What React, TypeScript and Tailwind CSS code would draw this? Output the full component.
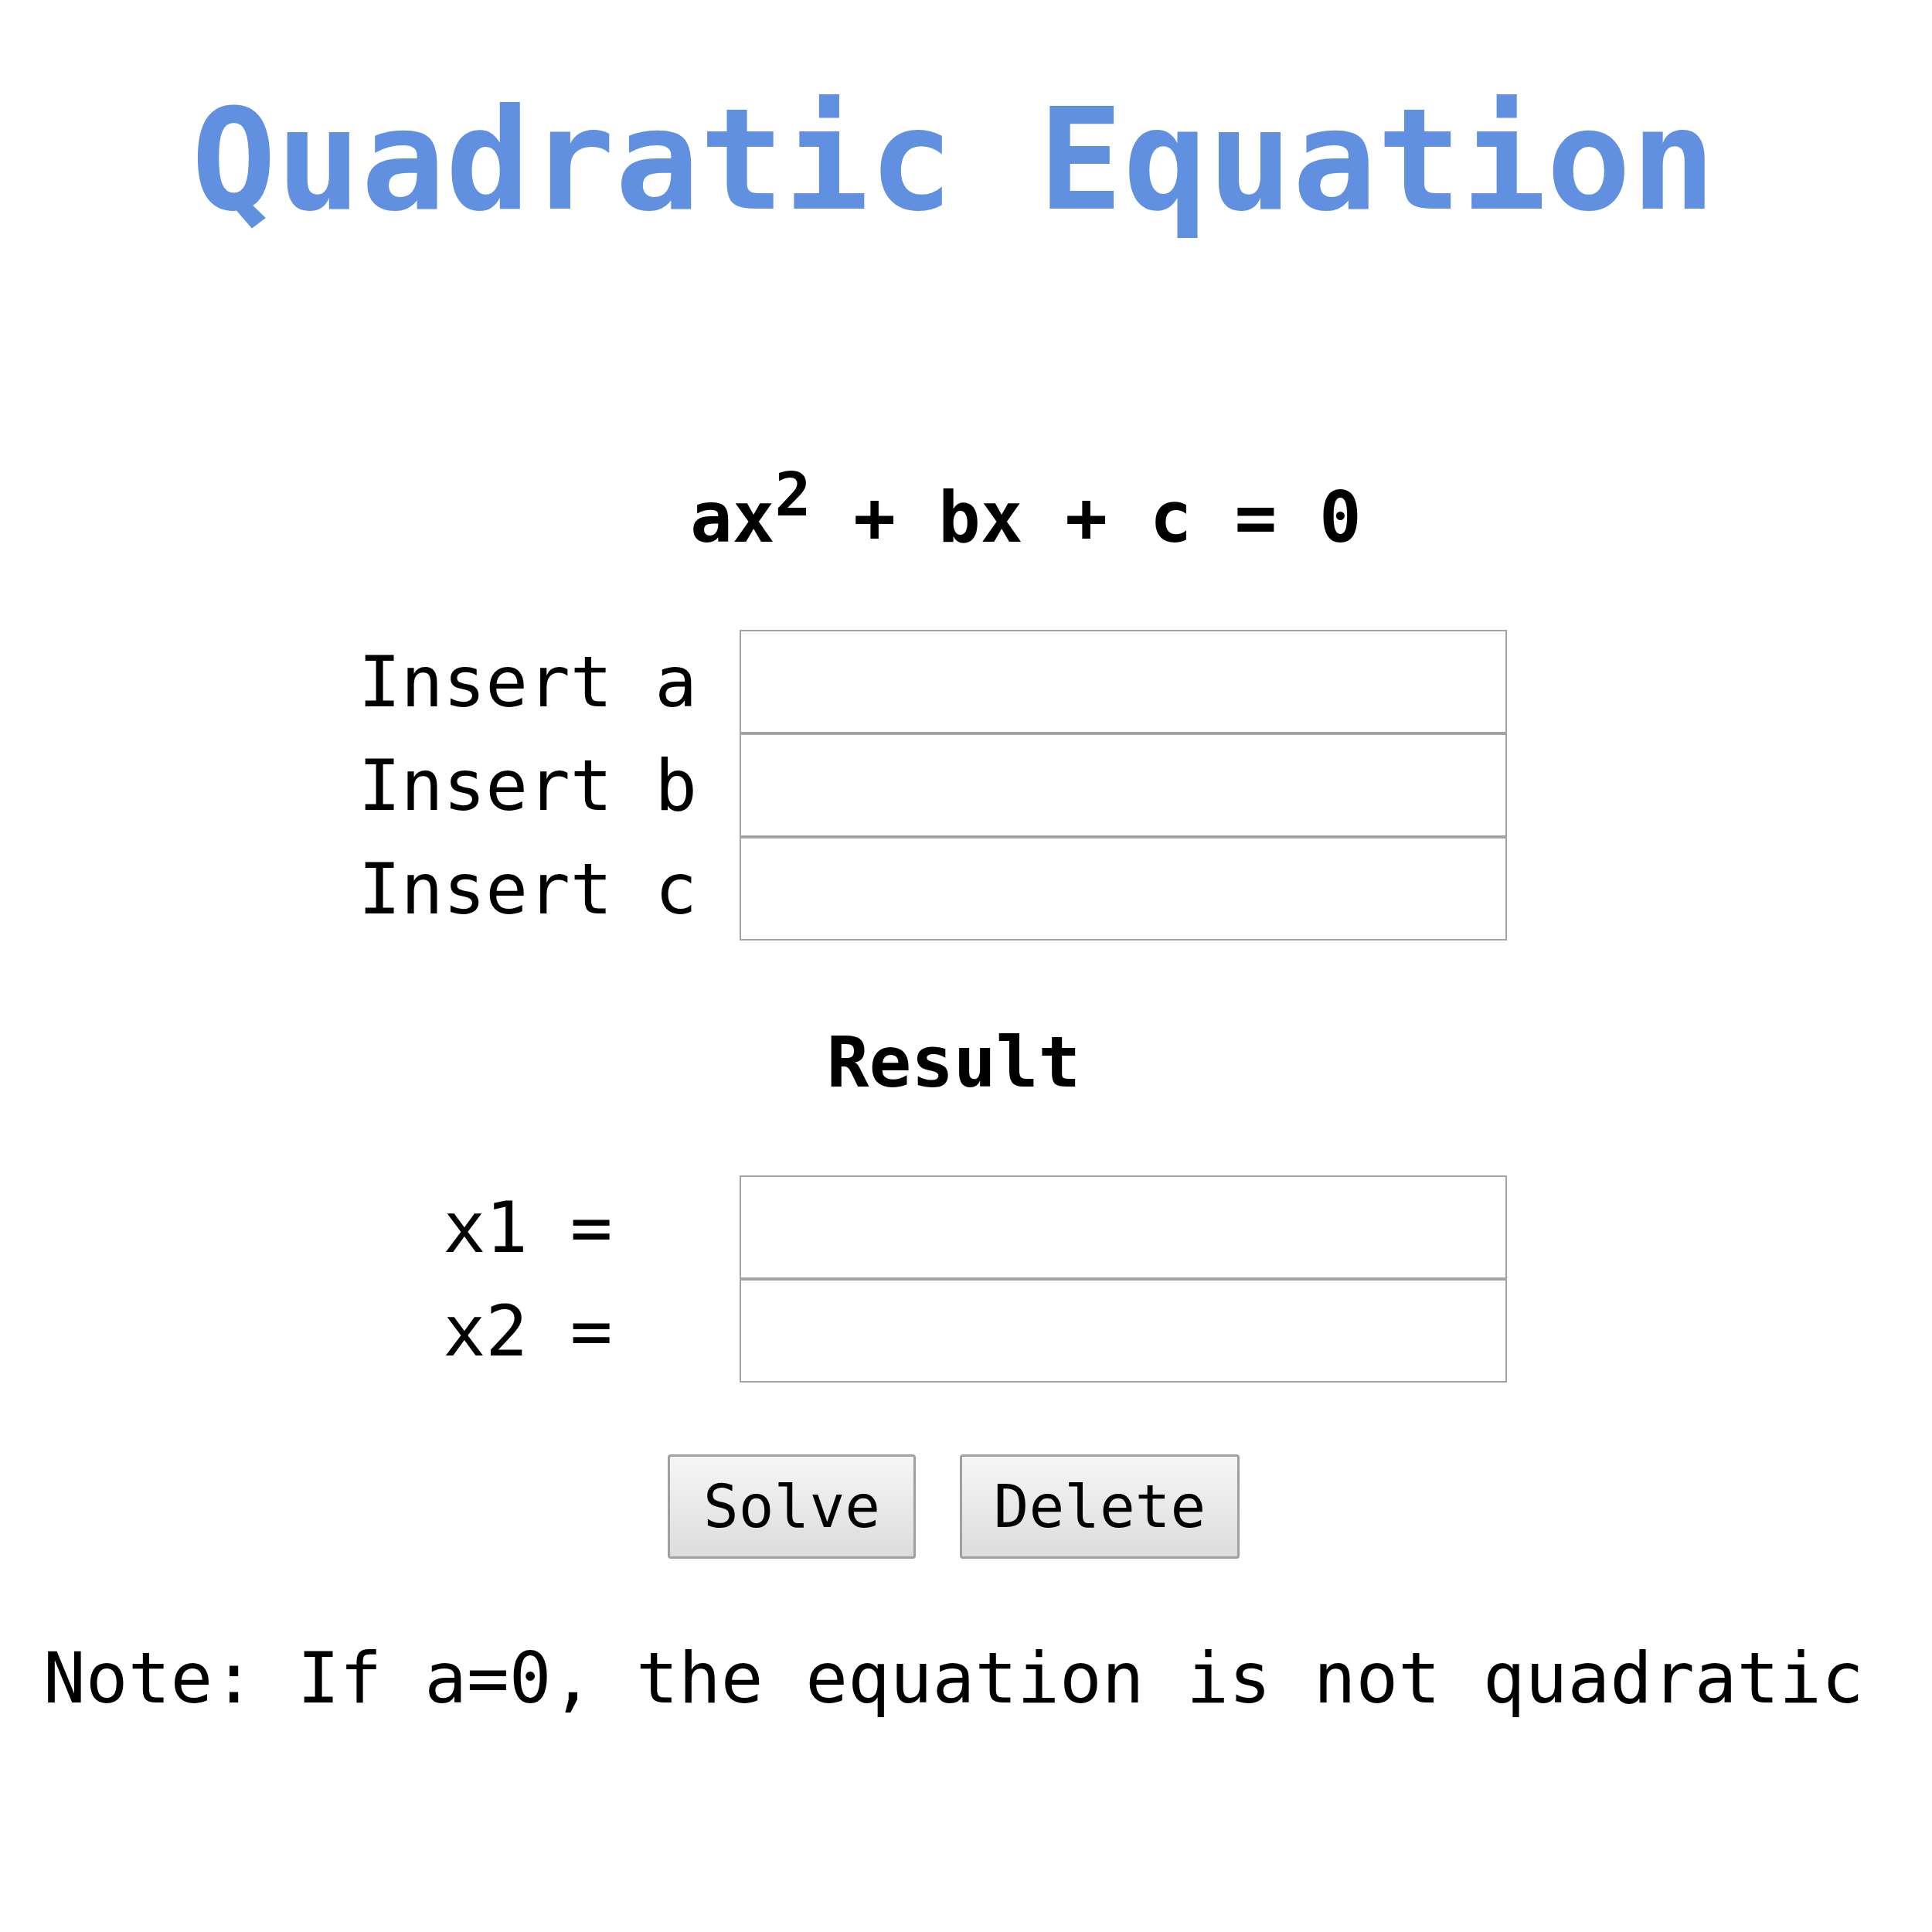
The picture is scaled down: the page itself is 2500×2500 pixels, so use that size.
import React from "react";

const mono = "font-['DejaVu_Sans_Mono','Liberation_Mono',monospace]";

function Field() {
  return (
    <input
      type="text"
      className="block w-[993px] h-[134px] border-2 border-[#a4a4a4] bg-white outline-none"
    />
  );
}

export default function App() {
  return (
    <div className={`w-[2468px] bg-white text-black ${mono}`}>
      <h1 className="pt-[116px] text-center text-[182px] leading-none font-bold text-[#6190e1]">
        Quadratic Equation
      </h1>

      <div className="mt-[326px] pl-[893px] text-[91px] leading-none font-bold whitespace-pre">
        ax<span className="relative -top-[34px] text-[78px] leading-none">2</span> + bx + c = 0
      </div>

      <div className="mt-[100px] ml-[463px] grid grid-cols-[440px_993px] gap-x-[54px]">
        {["a", "b", "c"].map((k) => (
          <React.Fragment key={k}>
            <div className="flex items-center justify-center text-[91px] leading-none whitespace-pre">
              {`Insert ${k}`}
            </div>
            <Field />
          </React.Fragment>
        ))}
      </div>

      <h2 className="mt-[112px] text-center text-[91px] leading-none font-bold">Result</h2>

      <div className="mt-[101px] ml-[463px] grid grid-cols-[440px_993px] gap-x-[54px]">
        {["x1", "x2"].map((k) => (
          <React.Fragment key={k}>
            <div className="flex items-center justify-center text-[91px] leading-none whitespace-pre">
              {`${k} =`}
            </div>
            <Field />
          </React.Fragment>
        ))}
      </div>

      <div className="mt-[93px] flex justify-center gap-[57px]">
        <button className="w-[321px] h-[135px] rounded-[4px] border-[3px] border-[#a0a0a0] bg-gradient-to-b from-[#f6f6f6] to-[#dcdcdc] text-[76px] leading-none">
          Solve
        </button>
        <button className="w-[362px] h-[135px] rounded-[4px] border-[3px] border-[#a0a0a0] bg-gradient-to-b from-[#f6f6f6] to-[#dcdcdc] text-[76px] leading-none">
          Delete
        </button>
      </div>

      <p className="mt-[109px] pb-[200px] text-center text-[91px] leading-none whitespace-pre">
        Note: If a=0, the equation is not quadratic
      </p>
    </div>
  );
}
